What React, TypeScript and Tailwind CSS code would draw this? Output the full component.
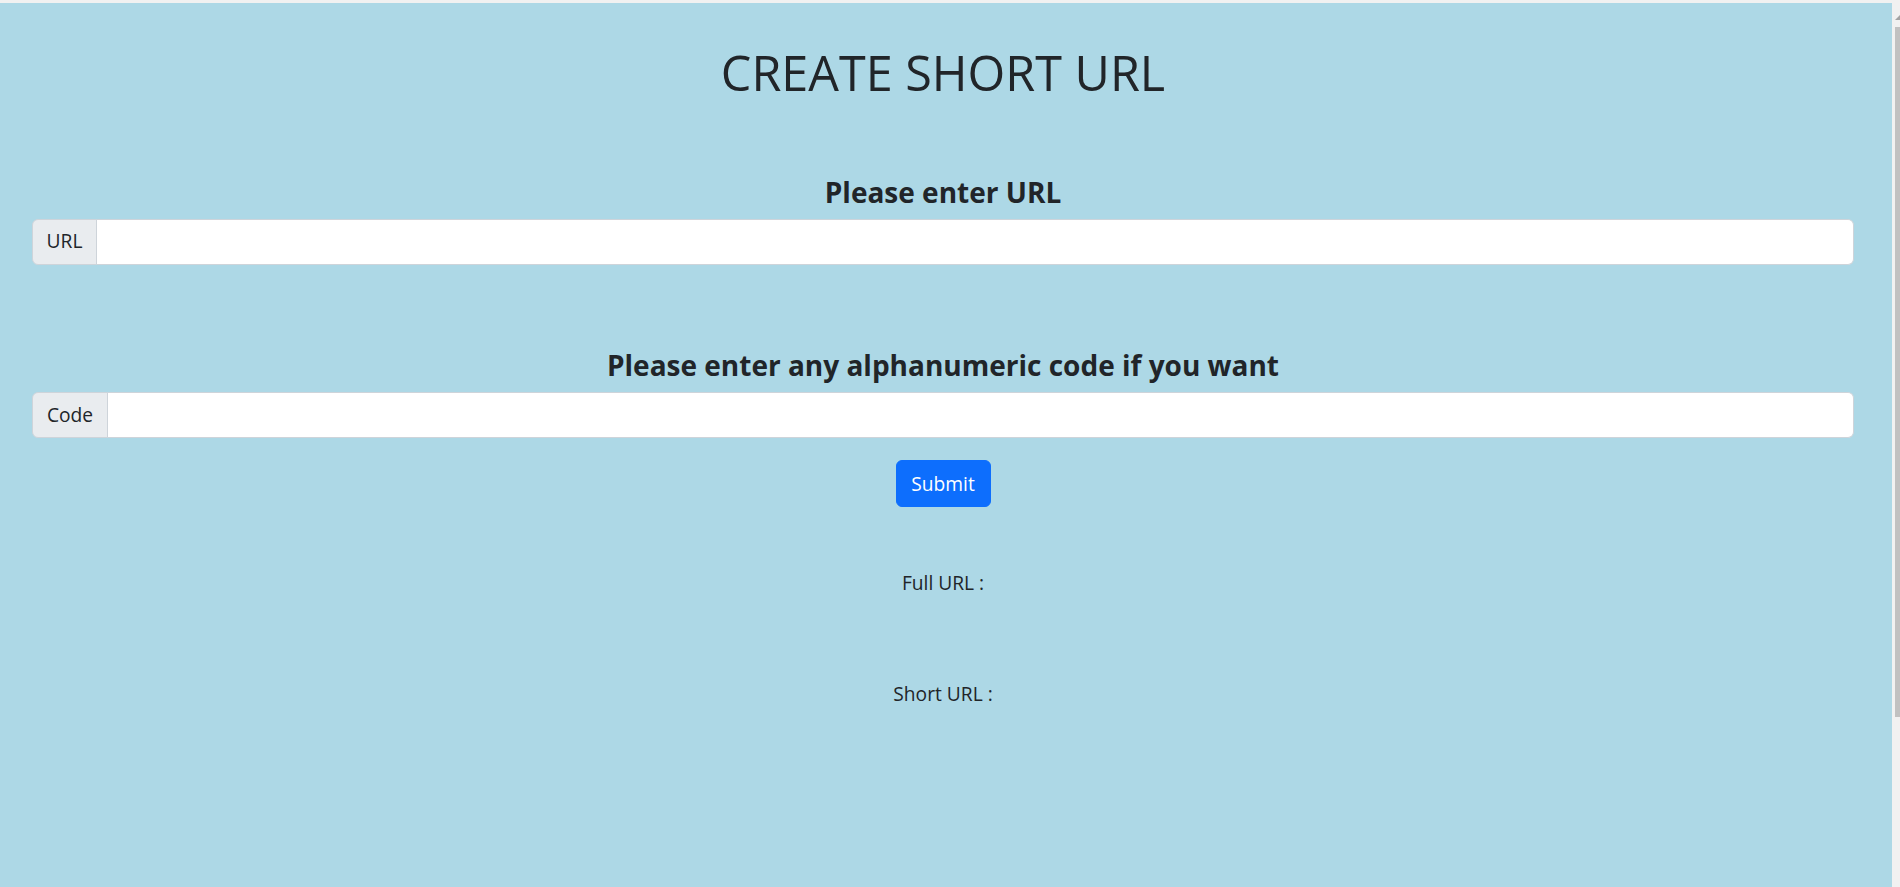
import { useState } from 'react'

// label + text field, bootstrap style input group
function InputGroup({ label, width, value, onChange }: { label: string; width: string; value: string; onChange: (v: string) => void }) {
  return (
    <div className="flex h-[46px] w-full">
      <span
        className={`${width} flex items-center justify-center rounded-l-[6px] border border-[#ced4da] bg-[#e9ecef] text-[19.2px] leading-[28.8px] text-[#212529]`}
      >
        {label}
      </span>
      <input
        type="text"
        value={value}
        onChange={(e) => onChange(e.target.value)}
        className="flex-1 rounded-r-[6px] border border-l-0 border-[#ced4da] bg-white px-[14px] text-[19.2px] text-[#212529] outline-none"
      />
    </div>
  )
}

export default function App() {
  const [url, setUrl] = useState('')
  const [code, setCode] = useState('')

  return (
    <div className="flex h-[887px] w-full flex-col overflow-hidden font-['Open_Sans',sans-serif] text-[#212529]">
      <div className="h-[3px] w-full bg-[#f1f1f1]" />
      <div className="flex flex-1">
        <div className="flex flex-1 flex-col items-center bg-[#add8e6] pl-[32px] pr-[38px]">
          <h1 className="mt-[41px] mb-[10px] text-center text-[48.5px] leading-[57.6px] font-medium">CREATE SHORT URL</h1>

          <h4 className="mt-[63px] mb-[9.6px] text-center text-[28px] leading-[34.56px] font-bold">Please enter URL</h4>
          <InputGroup label="URL" width="w-[65px]" value={url} onChange={setUrl} />

          <h4 className="mt-[83.5px] mb-[9.6px] text-center text-[28px] leading-[34.56px] font-bold">
            Please enter any alphanumeric code if you want
          </h4>
          <InputGroup label="Code" width="w-[76px]" value={code} onChange={setCode} />

          <button className="mt-[22px] flex h-[47px] w-[95px] items-center justify-center rounded-[6px] border border-[#0d6efd] bg-[#0d6efd] text-[19.2px] leading-[28.8px] text-white">
            Submit
          </button>

          <p className="mt-[62px] text-center text-[19.2px] leading-[28.8px]">Full URL : </p>
          <p className="mt-[82px] text-center text-[19.2px] leading-[28.8px]">Short URL : </p>
        </div>

        {/* browser scrollbar sliver */}
        <div className="flex w-[8px] flex-col bg-[#f1f1f1]">
          <svg className="mt-[12px] ml-[3px] h-[5px] w-[5px]" viewBox="0 0 5 5">
            <path d="M0 5 L5 0 L5 5 Z" fill="#a3a3a3" />
          </svg>
          <div className="mt-[7px] ml-[3px] h-[690px] w-[5px] bg-[#c1c1c1]" />
        </div>
      </div>
    </div>
  )
}
